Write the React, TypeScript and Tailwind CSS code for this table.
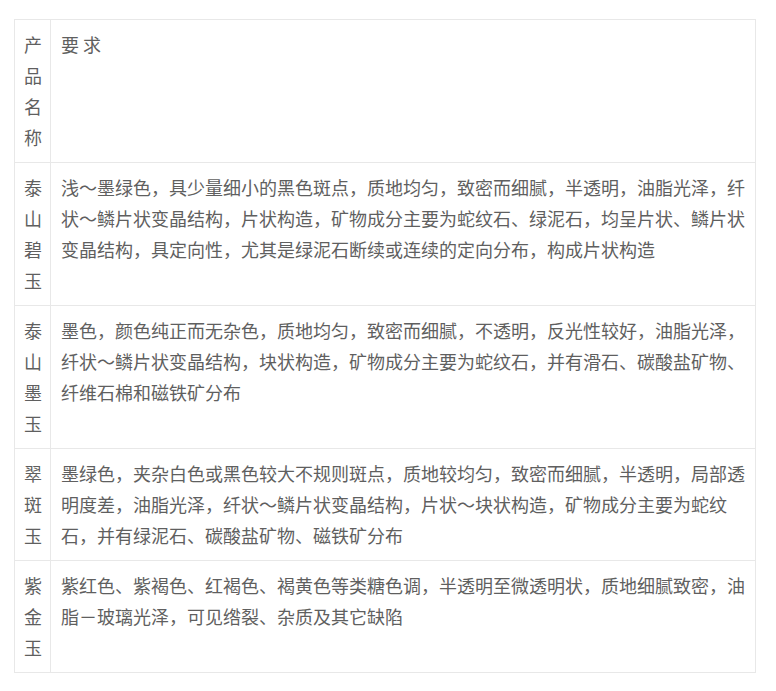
const rows: { name: string; text: string }[] = [
  { name: '产品名称', text: '要 求' },
  {
    name: '泰山碧玉',
    text: '浅～墨绿色，具少量细小的黑色斑点，质地均匀，致密而细腻，半透明，油脂光泽，纤状～鳞片状变晶结构，片状构造，矿物成分主要为蛇纹石、绿泥石，均呈片状、鳞片状变晶结构，具定向性，尤其是绿泥石断续或连续的定向分布，构成片状构造',
  },
  {
    name: '泰山墨玉',
    text: '墨色，颜色纯正而无杂色，质地均匀，致密而细腻，不透明，反光性较好，油脂光泽，纤状～鳞片状变晶结构，块状构造，矿物成分主要为蛇纹石，并有滑石、碳酸盐矿物、纤维石棉和磁铁矿分布',
  },
  {
    name: '翠斑玉',
    text: '墨绿色，夹杂白色或黑色较大不规则斑点，质地较均匀，致密而细腻，半透明，局部透明度差，油脂光泽，纤状～鳞片状变晶结构，片状～块状构造，矿物成分主要为蛇纹石，并有绿泥石、碳酸盐矿物、磁铁矿分布',
  },
  {
    name: '紫金玉',
    text: '紫红色、紫褐色、红褐色、褐黄色等类糖色调，半透明至微透明状，质地细腻致密，油脂－玻璃光泽，可见绺裂、杂质及其它缺陷',
  },
];

export default function App() {
  return (
    <div className="min-h-screen bg-white pt-[19px] pl-[14px]">
      <div
        className="grid w-[742px] grid-cols-[36px_1fr] border-l border-t border-[#e8e8e8] text-[18px] leading-[31px] text-[#5f5f5f]"
        style={{ fontFamily: '"Noto Sans CJK SC", "Noto Sans", sans-serif' }}
      >
        {rows.map((r) => (
          <div key={r.name} className="contents">
            <div className="border-b border-r border-[#e8e8e8] px-[9px] py-[9px] break-all">{r.name}</div>
            <div className="border-b border-r border-[#e8e8e8] py-[9px] pl-[10px] pr-[8px]">{r.text}</div>
          </div>
        ))}
      </div>
    </div>
  );
}
